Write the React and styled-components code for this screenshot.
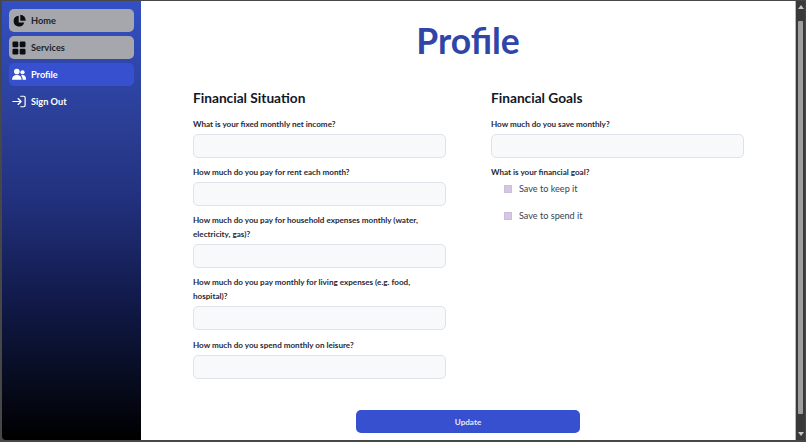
import styled, { createGlobalStyle } from "styled-components";

const GlobalStyle = createGlobalStyle`
  html, body {
    margin: 0;
    height: 100%;
    overflow: hidden;
    background: #4a4a4a;
  }
  #root {
    height: 100%;
  }
`;

const Frame = styled.div`
  display: flex;
  width: 806px;
  height: 442px;
  box-sizing: border-box;
  padding: 1px 1px 2px 2px;
  background: #474747;
  font-family: Lato, Roboto, sans-serif;
  overflow: hidden;
`;

const Sidebar = styled.nav`
  display: flex;
  flex-direction: column;
  gap: 4px;
  flex: 0 0 139px;
  box-sizing: border-box;
  padding: 8px 7px;
  background: linear-gradient(180deg, #3350c4 0%, #2b3f96 27%, #22317e 45%, #111a4a 68%, #070c20 86%, #000 100%);
  border-bottom-left-radius: 4px;
`;

const NavItem = styled.a`
  display: flex;
  align-items: center;
  gap: 5px;
  height: 23px;
  padding: 0 3px;
  border-radius: 5px;
  font-size: 9.2px;
  font-weight: 700;
  color: ${(p) => (p.$tone === "muted" ? "#1b1f2a" : "#fff")};
  background: ${(p) =>
    p.$tone === "muted" ? "#a6a7ad" : p.$tone === "active" ? "#3650cf" : "transparent"};
`;

const IconBox = styled.span`
  display: flex;
  align-items: center;
  justify-content: center;
  width: 14px;
  height: 14px;
  flex: none;
`;

const Main = styled.main`
  flex: 1;
  display: flex;
  flex-direction: column;
  align-items: center;
  background: #fff;
  padding: 16px 52px 0;
  min-width: 0;
`;

const Title = styled.h1`
  margin: 0;
  font-size: 35.5px;
  line-height: 47px;
  font-weight: 700;
  color: #2f46a8;
`;

const Columns = styled.div`
  display: grid;
  grid-template-columns: 253px 253px;
  column-gap: 45px;
  width: 100%;
  margin-top: 24px;
`;

const Column = styled.section`
  display: flex;
  flex-direction: column;
`;

const Heading = styled.h2`
  margin: 0 0 9px;
  font-size: 13.7px;
  line-height: 20px;
  font-weight: 700;
  color: #111827;
`;

const Field = styled.label`
  display: block;
  margin-bottom: 7px;
`;

const FieldLabel = styled.span`
  display: block;
  margin-bottom: 3px;
  font-size: 8.1px;
  line-height: 14px;
  font-weight: 700;
  color: #1f2937;
`;

const TextInput = styled.input`
  display: block;
  width: 100%;
  height: 24px;
  box-sizing: border-box;
  background: #f8f9fb;
  border: 1px solid #dfe2e8;
  border-radius: 5px;
`;

const LastField = styled(Field)`
  margin-top: 1px;
`;

const GoalList = styled.div`
  display: flex;
  flex-direction: column;
  gap: 10px;
  margin-top: -2px;
  padding-left: 13px;
`;

const GoalRow = styled.label`
  display: flex;
  align-items: center;
  gap: 7px;
  height: 17px;
  font-size: 9.1px;
  color: #374151;
`;

const GoalBox = styled.span`
  width: 8px;
  height: 8px;
  background: #d6c6e4;
  box-shadow: inset 0 0 0 1px #cdbde0;
`;

const Footer = styled.div`
  margin-top: 24px;
`;

const UpdateButton = styled.button`
  display: block;
  width: 224px;
  height: 23px;
  border: 0;
  border-radius: 5px;
  background: #3650cf;
  color: #e6e9fb;
  font-family: inherit;
  font-size: 8.1px;
  font-weight: 700;
`;

const Scrollbar = styled.div`
  flex: 0 0 9px;
  display: flex;
  flex-direction: column;
  align-items: center;
  background: #3a3a3a;
  border-left: 1px solid #b9b9b9;
`;

const Arrow = styled.span`
  flex: none;
  width: 0;
  height: 0;
  margin: 4px 0;
  border-left: 3px solid transparent;
  border-right: 3px solid transparent;
  ${(p) => (p.$up ? "border-bottom: 4px solid #c4c4c4;" : "border-top: 4px solid #c4c4c4;")}
`;

const Thumb = styled.div`
  flex: 1;
  width: 5px;
  margin: 8px 0 0;
  background: #9e9e9e;
  border-radius: 1px;
`;

const ThumbGap = styled.div`
  flex: 0 0 14px;
`;

const HomeIcon = () => (
  <svg width="13" height="13" viewBox="0 0 16 16" fill="#0b0d14">
    <path d="M7 2.2a6.6 6.6 0 1 0 6.8 8.2H7z" />
    <path d="M9 .8v7.4h6.6A7.2 7.2 0 0 0 9 .8z" />
  </svg>
);

const ServicesIcon = () => (
  <svg width="14" height="14" viewBox="0 0 14 14" fill="#0b0d14">
    <rect x="0.5" y="0.5" width="5.8" height="5.8" rx="1.2" />
    <rect x="7.7" y="0.5" width="5.8" height="5.8" rx="1.2" />
    <rect x="0.5" y="7.7" width="5.8" height="5.8" rx="1.2" />
    <rect x="7.7" y="7.7" width="5.8" height="5.8" rx="1.2" />
  </svg>
);

const ProfileIcon = () => (
  <svg width="14" height="13" viewBox="0 0 16 14" fill="#fff">
    <circle cx="5.5" cy="3.6" r="3.2" />
    <path d="M0 13c0-3.4 2.2-5.4 5.5-5.4S11 9.6 11 13z" />
    <circle cx="12" cy="4.4" r="2.4" />
    <path d="M12.2 13c0-2-.6-3.7-1.8-5 .5-.2 1-.3 1.7-.3 2.4 0 3.9 1.7 3.9 4.2v1.1z" />
  </svg>
);

const SignOutIcon = () => (
  <svg width="14" height="13" viewBox="0 0 16 14" fill="none" stroke="#fff" strokeWidth="1.4" strokeLinecap="round" strokeLinejoin="round">
    <path d="M1 7h9M7 3.6 10.4 7 7 10.4" />
    <path d="M10 1h3.4c.9 0 1.6.7 1.6 1.6v8.8c0 .9-.7 1.6-1.6 1.6H10" />
  </svg>
);

const navItems = [
  { label: "Home", tone: "muted", icon: <HomeIcon /> },
  { label: "Services", tone: "muted", icon: <ServicesIcon /> },
  { label: "Profile", tone: "active", icon: <ProfileIcon /> },
  { label: "Sign Out", tone: "plain", icon: <SignOutIcon /> },
];

const situationFields = [
  "What is your fixed monthly net income?",
  "How much do you pay for rent each month?",
  "How much do you pay for household expenses monthly (water, electricity, gas)?",
  "How much do you pay monthly for living expenses (e.g. food, hospital)?",
];

const App = () => {
  return (
    <Frame>
      <GlobalStyle />
      <Sidebar>
        {navItems.map((item) => (
          <NavItem key={item.label} $tone={item.tone}>
            <IconBox>{item.icon}</IconBox>
            {item.label}
          </NavItem>
        ))}
      </Sidebar>
      <Main>
        <Title>Profile</Title>
        <Columns>
          <Column>
            <Heading>Financial Situation</Heading>
            {situationFields.map((label) => (
              <Field key={label}>
                <FieldLabel>{label}</FieldLabel>
                <TextInput />
              </Field>
            ))}
            <LastField>
              <FieldLabel>How much do you spend monthly on leisure?</FieldLabel>
              <TextInput />
            </LastField>
          </Column>
          <Column>
            <Heading>Financial Goals</Heading>
            <Field>
              <FieldLabel>How much do you save monthly?</FieldLabel>
              <TextInput />
            </Field>
            <FieldLabel>What is your financial goal?</FieldLabel>
            <GoalList>
              <GoalRow>
                <GoalBox />
                Save to keep it
              </GoalRow>
              <GoalRow>
                <GoalBox />
                Save to spend it
              </GoalRow>
            </GoalList>
          </Column>
        </Columns>
        <Footer>
          <UpdateButton>Update</UpdateButton>
        </Footer>
      </Main>
      <Scrollbar>
        <Arrow $up />
        <Thumb />
        <ThumbGap />
        <Arrow />
      </Scrollbar>
    </Frame>
  );
};

export default App;
